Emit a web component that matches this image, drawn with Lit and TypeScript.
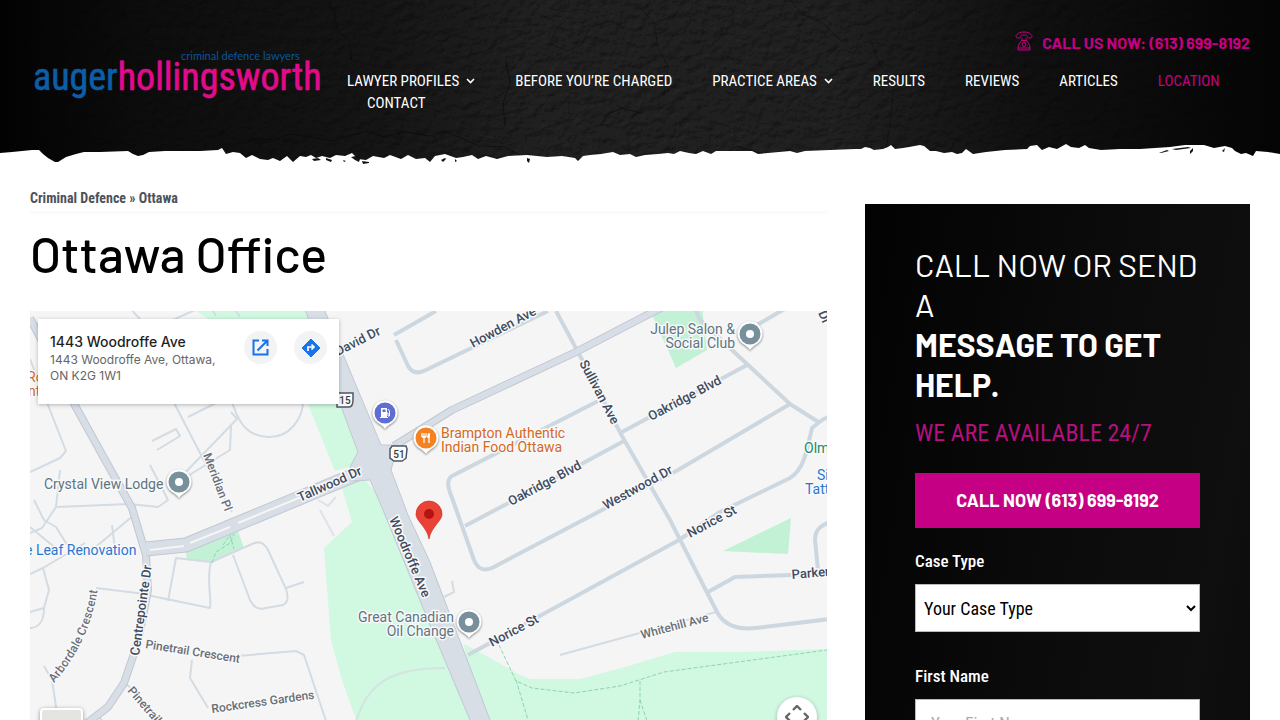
import { LitElement, html, svg, css } from "lit";
import { customElement } from "lit/decorators.js";
import { classMap } from "lit/directives/class-map.js";

interface NavItem {
  text: string;
  menu?: boolean;
  current?: boolean;
}

const NAV: NavItem[] = [
  { text: "Lawyer Profiles", menu: true },
  { text: "Before You’re Charged" },
  { text: "Practice Areas", menu: true },
  { text: "Results" },
  { text: "Reviews" },
  { text: "Articles" },
  { text: "Location", current: true },
  { text: "Contact" },
];

@customElement("site-header")
class SiteHeader extends LitElement {
  static styles = css`
    :host {
      display: block;
      position: relative;
      background: #0d0d0d;
      font-family: "Roboto Condensed", Roboto, sans-serif;
    }
    .texture,
    .tear {
      position: absolute;
      left: 0;
      width: 100%;
    }
    .texture {
      top: 0;
      height: 100%;
    }
    .tear {
      bottom: 0;
      height: 30px;
    }
    .bar {
      position: relative;
      display: flex;
      align-items: flex-start;
      gap: 25px;
      padding: 32px 30px 53px;
    }
    .logo {
      flex: none;
      margin-top: 16px;
      line-height: 0;
    }
    .logo svg {
      overflow: visible;
    }
    .name {
      font-family: "Roboto Condensed", Roboto, sans-serif;
      font-size: 38px;
      stroke-width: 0.6;
    }
    .blue {
      fill: #0b5ea8;
      stroke: #0b5ea8;
    }
    .pink {
      fill: #e20a8d;
      stroke: #e20a8d;
    }
    .tagline {
      fill: #0a559a;
      font-family: Lato, sans-serif;
      font-size: 11px;
    }
    .right {
      flex: 1;
      min-width: 0;
    }
    .phone {
      display: flex;
      justify-content: flex-end;
      align-items: center;
      gap: 9px;
      height: 22px;
      font: 700 16px/22px Barlow, sans-serif;
    }
    .phone a {
      color: #c50084;
      text-decoration: none;
    }
    .phone svg {
      margin-bottom: 4px;
    }
    ul {
      display: flex;
      flex-wrap: wrap;
      margin: 16px 0 0;
      padding: 0;
      list-style: none;
    }
    li {
      padding: 0 20px;
      line-height: 22px;
    }
    li:first-child {
      padding-left: 0;
    }
    li a {
      display: flex;
      align-items: center;
      gap: 7px;
      color: #fff;
      font-size: 15px;
      text-decoration: none;
      text-transform: uppercase;
    }
    li.current a {
      color: #c50084;
    }
  `;

  render() {
    return html`
      <svg class="texture" viewBox="0 0 1280 167" preserveAspectRatio="none" aria-hidden="true">
        <defs>
          <filter id="stone" x="0" y="0" width="100%" height="100%">
            <feTurbulence type="fractalNoise" baseFrequency="0.09 0.12" numOctaves="5" seed="8" />
            <feDiffuseLighting lighting-color="#282828" surfaceScale="2" diffuseConstant="1">
              <feDistantLight azimuth="235" elevation="50" />
            </feDiffuseLighting>
          </filter>
          <linearGradient id="shade">
            <stop offset="0" stop-color="#020202" />
            <stop offset="0.12" stop-color="#060606" stop-opacity="0.75" />
            <stop offset="0.3" stop-color="#080808" stop-opacity="0.5" />
            <stop offset="0.42" stop-color="#0a0a0a" stop-opacity="0.1" />
            <stop offset="0.65" stop-color="#0a0a0a" stop-opacity="0.1" />
            <stop offset="0.8" stop-color="#070707" stop-opacity="0.65" />
            <stop offset="1" stop-color="#030303" stop-opacity="0.96" />
          </linearGradient>
        </defs>
        <rect width="1280" height="167" filter="url(#stone)" />
        <g fill="none" stroke="#080808" stroke-opacity=".6">
          <path d="M326 0l8 12 3 17 12 12 3 20" />
          <path d="M250 138l24 2 16-6 22 3 20 4 16-5 21-5 14 6 24-5 22 4 14-5 16 6 20 9 26 1 28 15 22 4 40-2 40-7 28 4 36-9 20 5 18-11 30 9 40 2 26-6" />
          <path d="M566 20l-10 9-6 15 18 7 14-7 8-17 22-6 12 7M640 8l14 14 4 26 10 18-4 30M870 40l10 24 14 20-4 40-6 38M790 0l12 14 22 10 18 18" stroke-opacity=".4" />
          <path d="M506 62l4 20-7 22 2 22M600 126l8-12 14-6 18 5" />
        </g>
        <rect width="1280" height="167" fill="url(#shade)" />
      </svg>
      <svg class="tear" viewBox="0 0 1280 30" preserveAspectRatio="none" aria-hidden="true">
        <path
          fill="#fff"
          d="M0 16L12 15 22 14 32 13 39 13 43 17 48 21 55 25 58 25 66 20 76 17 84 15 100 15 128 14 133 17 138 19 143 18 149 15 165 14 200 14 218 13 222 11 226 17 233 15 240 16 246 21 252 18 260 22 268 23 273 21 280 24 287 19 293 25 300 19 306 20 311 18 316 21 322 19 330 21 336 18 345 19 352 16 358 22 366 23 373 19 384 21 390 18 401 22 408 18 416 22 425 21 430 25 435 19 445 17 456 21 463 20 472 18 478 22 486 19 497 22 508 19 527 18 547 20 562 19 575 21 578 24 583 19 590 18 601 17 613 15 620 18 630 17 636 20 645 18 658 17 668 16 674 17 680 14 689 16 696 17 703 14 711 17 716 14 740 14 752 14 758 17 768 16 790 14 797 16 805 14 830 13 855 12 861 12 865 10 870 11 874 13 883 12 888 10 891 8 895 12 903 11 909 10 920 8 924 9 930 14 936 14 944 16 952 15 957 17 962 16 966 12 973 17 986 15 1005 13 1027 12 1030 9 1037 8 1042 13 1049 10 1057 12 1066 7 1071 10 1079 11 1085 8 1089 11 1101 13 1120 12 1140 12 1155 11 1170 10 1185 8 1204 8 1214 11 1225 9 1232 11 1235 14 1241 17 1246 16 1253 19 1256 14 1268 15 1280 17V30H0Z"
        />
        <g fill="#151515">
          <path d="M312 22l6-1 3 2-7 1zM326 21l6 2-1 2-5-2zM351 20l5-1 4 3-1 3-4-2zM362 24l7 1 0 1-6 1zM343 23l3 1-2 1zM441 23l4-2 1 1-3 3zM455 22l2 2-2 1zM527 21l3 1-1 4-2-2z" />
          <path d="M1159 16l8-3 2 1-8 2zM1172 12l16-2 3 1-15 2zM1190 14l3-3 0 3-3 3zM1222 14l3-3-1 4z" />
        </g>
      </svg>
      <div class="bar">
        <a class="logo" href="#" aria-label="Auger Hollingsworth home">
          <svg width="292" height="54" viewBox="0 0 292 54">
            <text class="name" x="3" y="42"><tspan class="blue">auger</tspan><tspan class="pink">hollingsworth</tspan></text>
            <text class="tagline" x="151" y="12">criminal defence lawyers</text>
          </svg>
        </a>
        <div class="right">
          <div class="phone">
            <svg width="18" height="20" viewBox="0 0 18 20" fill="none" stroke="#c50084" aria-hidden="true">
              <path d="M1 5.500C1.500 2.500 5 1 9 1s7.500 1.500 8 4.500c0 1-.6 1.400-1.600 1.400h-2c-.8 0-1-.5-1-1.400C12.300 4.500 11 4 9 4s-3.300.5-3.400 1.500c0 .9-.2 1.400-1 1.400h-2C1.600 6.900 1 6.500 1 5.500z" />
              <path d="M7 7v2.500h4V7M6.500 9.500h5c1.500 1.500 3 4 3.500 7v2.500H3v-2.500c.5-3 2-5.500 3.500-7zM3 17h12" />
              <ellipse cx="9" cy="13.500" rx="1.800" ry="2.200" />
            </svg>
            <a href="tel:6136998192">CALL US NOW: (613) 699-8192</a>
          </div>
          <nav>
            <ul>
              ${NAV.map(
                (item) => html`<li class=${classMap({ current: !!item.current })}>
                  <a href="#">${item.text}${item.menu
                    ? html`<svg width="9" height="6" viewBox="0 0 9 6" fill="none" stroke="currentColor" stroke-width="1.6"><path d="M1 1l3.500 3.500L8 1" /></svg>`
                    : ""}</a>
                </li>`,
              )}
            </ul>
          </nav>
        </div>
      </div>
    `;
  }
}

const pin = (x: number, y: number, color: string, glyph: unknown) => svg`
  <g transform="translate(${x} ${y})">
    <path class="drop" d="M0 16c-2-3-4-4-7-6a12.500 12.500 0 1 1 14 0c-3 2-5 3-7 6z"/>
    <circle r="10.500" fill=${color}/>
    ${glyph}
  </g>`;
const dot = svg`<circle r="4" fill="#fff"/>`;

@customElement("office-map")
class OfficeMap extends LitElement {
  static styles = css`
    :host {
      display: block;
      position: relative;
      overflow: hidden;
      height: 450px;
      background: #f5f5f5;
      font-family: Roboto, sans-serif;
    }
    .canvas {
      display: block;
      width: 100%;
      height: 100%;
    }
    .park {
      fill: #d1f8e1;
    }
    .garden {
      fill: #c2f1d5;
    }
    .lane,
    .street,
    .road,
    .edge,
    .median,
    .trail {
      fill: none;
      stroke-linejoin: round;
    }
    .lane {
      stroke: #d3dbe3;
      stroke-width: 2;
    }
    .street {
      stroke: #cdd7df;
      stroke-width: 4;
    }
    .edge {
      stroke: #c0c8d3;
    }
    .road {
      stroke: #d8dee6;
    }
    .median {
      stroke: #f5f5f5;
      stroke-width: 2;
    }
    .highway {
      fill: #d8dee6;
      stroke: #c0c8d3;
    }
    .trail {
      stroke: #8fd3b4;
      stroke-width: 1;
      stroke-dasharray: 4 2;
    }
    .drop {
      fill: #fff;
      filter: drop-shadow(0 1px 1px #0007);
    }
    text {
      font-size: 13px;
      fill: #5f6672;
      stroke: #f8f9fa;
      stroke-width: 3;
      stroke-linejoin: round;
      paint-order: stroke;
    }
    .major {
      fill: #3f4b5f;
      font-weight: 500;
    }
    .minor {
      font-size: 12px;
      font-weight: 500;
      fill: #696e76;
    }
    .place {
      font-size: 14px;
      fill: #5f7580;
    }
    .food {
      fill: #d5691f;
    }
    .shop {
      fill: #2b76d2;
    }
    .gym {
      fill: #278a64;
    }
    .end {
      text-anchor: end;
    }
    .shield {
      fill: #fff;
      stroke: #4c5561;
      stroke-width: 1.5;
    }
    .number {
      font-size: 10px;
      font-weight: 500;
      fill: #333b46;
      text-anchor: middle;
    }
    .card {
      position: absolute;
      top: 8px;
      left: 8px;
      display: flex;
      box-sizing: border-box;
      width: 301px;
      min-height: 85px;
      padding: 12px;
      background: #fff;
      box-shadow: 0 1px 4px #0004;
      font-family: Inter, Roboto, sans-serif;
    }
    .words {
      flex: 1;
      padding-top: 2px;
    }
    .title {
      font-size: 14px;
      font-weight: 500;
      line-height: 17px;
      color: #1f1f1f;
    }
    .address {
      width: 170px;
      padding-top: 2px;
      font-size: 12px;
      line-height: 16px;
      color: #666;
    }
    .actions {
      display: flex;
      gap: 17px;
    }
    .round {
      display: grid;
      place-items: center;
      width: 33px;
      height: 33px;
      border-radius: 50%;
      background: #f1f3f4;
    }
    .camera {
      position: absolute;
      right: 10px;
      bottom: 24px;
      display: grid;
      place-items: center;
      width: 40px;
      height: 40px;
      padding: 0;
      border: 0;
      border-radius: 50%;
      background: #fff;
      box-shadow: 0 1px 4px #0004;
    }
    .layers {
      position: absolute;
      left: 10px;
      bottom: 10px;
      width: 43px;
      height: 43px;
      border: 2px solid #fff;
      border-radius: 4px;
      background: #e4e4e0;
      box-shadow: 0 1px 4px #0006;
    }
  `;

  render() {
    return html`
      <svg class="canvas" viewBox="30 311 797 450" preserveAspectRatio="xMidYMin slice" role="img" aria-label="Map of the office">
        <path class="park" d="M180 300H310L345 400 366 452 352 466 335 471 308 404 298 380z" />
        <path class="park" d="M340 481L362 476 390 510 480 740 486 765H372L342 680 331 640 324 548 352 522z" />
        <path class="park" d="M464 644L494 660 518 674 530 679H580L625 667 675 652H740L830 649V765H480z" />
        <path class="garden" d="M648 306h54L707 350 676 368zM723 551L791 518 788 554zM186 552L238 531 244 548 212 563 187 560z" />

        <path class="lane" d="M30 359L66 451 60 458 30 472M170 395L214 480 232 512M128 306L150 330 204 306M210 306l6 10M232 305l8 12M230 395C238 425 248 436 268 437S305 420 303 395M188 417L222 400M152 441L176 429 180 436 157 450M178 480L237 419 231 412M178 482L230 450 231 426M150 465L168 500 158 507 130 504 56 507 42 528 30 533M34 500L44 520 56 527 66 543 58 550 30 527M66 543L86 555 134 515M56 507L60 470M30 574L43 568 85 543M43 568L49 590 44 608 30 612M44 608C44 622 38 628 30 628M112 525L115 550M96 588L137 593 210 608C212 600 206 580 211 562L176 558 168 601M233 555L250 600C254 608 260 610 266 608L283 605C289 602 288 596 286 589L268 550C264 542 258 541 252 544L211 562M286 588L304 582M238 656L296 651 304 655 329 730M192 660L190 678 208 708M44 666L52 680 58 720M124 683L137 692M97 712L107 730M560 655L716 612M452 581L454 592 444 597" />
        <path class="trail" d="M212 563L216 552 230 543 234 534M223 545l7-10 4 14M499 645L516 681 532 688 574 693 620 686 664 672 827 650M516 680L540 760M640 681V700L634 765M640 700l20 60" />
        <path class="lane" d="M355 725C367 680 395 668 445 668M320 510L334 536M318 500l10 6 8-9" stroke-opacity=".7" />

        <path class="street" d="M396 340L408 366C412 373 418 374 426 370L548 311M394 335L436 311M556 311L578 352 622 436 670 520 717 612C724 625 738 630 756 628L830 619M452 476C446 480 448 488 451 495L474 560C478 570 484 571 492 568L678 470 790 404M465 526L548 482 624 441M622 432L747 365M452 476L600 400M468 655L679 540 720 512 790 478C803 470 806 455 812 428L822 420 830 416M694 306L700 320 732 350 790 404 820 423M748 330L790 306M708 592L735 577 820 574M818 570L815 540C815 530 820 526 830 522" />
        <path class="edge" stroke-width="8" d="M394 446L452 410 576 352 680 298M30 318L72 400 104 458 132 508 146 555 148 590 138 642 124 683 108 707 78 730 38 760" />
        <path class="road" stroke-width="6" d="M394 446L452 410 576 352 680 298M30 318L72 400 104 458 132 508 146 555 148 590 138 642 124 683 108 707 78 730 38 760" />
        <path class="edge" stroke-width="15" d="M146 549L186 545 362 472" />
        <path class="road" stroke-width="13" d="M146 549L186 545 362 472" />
        <path class="median" d="M150 550L184 546M190 543L230 527M238 523L335 483" />
        <path class="highway" d="M303 304H322L381 445H398L391 470 408 515 430 562 490 720 507 765H488L470 720 430 625 383 510 370 480 350 481V467L358 452z" />

        <text class="major" transform="translate(338 356) rotate(-27)">David Dr</text>
        <text class="major" transform="translate(473 348) rotate(-28)">Howden Ave</text>
        <text class="major" transform="translate(579 363) rotate(62)">Sullivan Ave</text>
        <text class="major" transform="translate(651 421) rotate(-28)">Oakridge Blvd</text>
        <text class="major" transform="translate(511 506) rotate(-28)">Oakridge Blvd</text>
        <text class="major" transform="translate(606 510) rotate(-29)">Westwood Dr</text>
        <text class="major" transform="translate(690 538) rotate(-28)">Norice St</text>
        <text class="major" transform="translate(492 647) rotate(-28)">Norice St</text>
        <text class="major" transform="translate(792 579) rotate(-5)">Parker</text>
        <text class="major" transform="translate(300 502) rotate(-24)">Tallwood Dr</text>
        <text class="major" transform="translate(389 519) rotate(67)">Woodroffe Ave</text>
        <text class="major" transform="translate(139 656) rotate(-82)">Centrepointe Dr</text>
        <text class="major" transform="translate(818 313) rotate(66)">Dr</text>
        <text class="minor" transform="translate(203 455) rotate(69)">Meridian Pl</text>
        <text class="minor" transform="translate(145 648) rotate(9)">Pinetrail Crescent</text>
        <text class="minor" transform="translate(127 691) rotate(49)">Pinetrail</text>
        <text class="minor" transform="translate(212 713) rotate(-8)">Rockcress Gardens</text>
        <text class="minor" transform="translate(642 639) rotate(-15)">Whitehill Ave</text>
        <path id="arbordale" fill="none" d="M54 683C75 658 92 630 99 582" />
        <text class="minor"><textPath href="#arbordale">Arbordale Crescent</textPath></text>

        <path class="shield" d="M337 393h16v6c0 5-1 8-4 8h-12z" />
        <text class="number" x="345" y="404">15</text>
        <path class="shield" d="M392 446h14l1 3-1 9-4 3h-8l-4-3v-9z" />
        <text class="number" x="399" y="457.500">51</text>

        <text class="place" x="44" y="489">Crystal View Lodge</text>
        <text class="place shop" x="25" y="555">e Leaf Renovation</text>
        <text class="place food" x="441" y="438">Brampton Authentic</text>
        <text class="place food" x="441" y="452">Indian Food Ottawa</text>
        <text class="place end" x="735" y="334">Julep Salon &amp;</text>
        <text class="place end" x="735" y="348">Social Club</text>
        <text class="place end" x="454" y="622">Great Canadian</text>
        <text class="place end" x="454" y="636">Oil Change</text>
        <text class="place gym" x="804" y="453">Olm</text>
        <text class="place shop" x="817" y="480">Si</text>
        <text class="place shop" x="805" y="494">Tatt</text>
        <text class="place food" x="27" y="382">Ro</text>
        <text class="place food" x="28" y="396">nt</text>

        ${pin(179, 482, "#78909c", dot)} ${pin(750, 334, "#78909c", dot)}
        ${pin(469, 622, "#78909c", dot)}
        ${pin(385, 413, "#5f6fd1", svg`<path d="M-4-5h6v9h1v1h-8v-1h1zm1.500 1.500v2.500h3v-2.500z" fill="#fff" fill-rule="evenodd"/><path d="M2 0h1v3h1.500v-5l-1.500-2" fill="none" stroke="#fff"/>`)}
        ${pin(426, 438, "#f58220", svg`<path d="M-4-5v4M-2-5v4M0-5v4M-2-1v6M3-5v10" stroke="#fff" stroke-width="1.200"/><path d="M-4.500-2h5l-1 2h-3zM3.500-5C1-4 1-1 1.500 0h2z" fill="#fff"/>`)}
        <path d="M429 539c-1-6-4-10-7-14s-6-7-6-11a13 13 0 1 1 26 0c0 4-3 7-6 11s-6 8-7 14z" fill="#ea4335" stroke="#c5221f" stroke-width=".6" />
        <circle cx="429" cy="514" r="5" fill="#b31412" />
      </svg>
      <div class="card">
        <div class="words">
          <div class="title">1443 Woodroffe Ave</div>
          <div class="address">1443 Woodroffe Ave, Ottawa, ON K2G 1W1</div>
        </div>
        <div class="actions">
          <a class="round" href="#" aria-label="Open in Maps">
            <svg width="17" height="17" viewBox="0 0 17 17" fill="none" stroke="#1a73e8" stroke-width="2"><path d="M7 1.500H1.500v14h14V10M10 1.500h5.500V7M15 2L5.500 11.500" /></svg>
          </a>
          <a class="round" href="#" aria-label="Directions">
            <svg width="20" height="20" viewBox="0 0 20 20"><path d="M10 1l9 9-9 9-9-9z" fill="#1a73e8" stroke="#1a73e8" stroke-linejoin="round" /><path d="M7 13V9h6M10.500 6.500L13 9l-2.500 2.500" fill="none" stroke="#fff" stroke-width="1.700" /></svg>
          </a>
        </div>
      </div>
      <button class="layers" aria-label="Show satellite imagery"></button>
      <button class="camera" aria-label="Map camera controls">
        <svg width="24" height="24" viewBox="0 0 24 24" fill="none" stroke="#666" stroke-width="2.400"><path d="M8 5l4-4 4 4M8 19l4 4 4-4M5 8l-4 4 4 4M19 8l4 4-4 4" /></svg>
      </button>
    `;
  }
}

@customElement("contact-panel")
class ContactPanel extends LitElement {
  static styles = css`
    :host {
      display: block;
      box-sizing: border-box;
      padding: 40px 50px 50px;
      background: linear-gradient(100deg, #020202, #0a0a0a 45%, #0f0f0f 85%, #0b0b0b);
      color: #fff;
      font-family: "Roboto Condensed", Roboto, sans-serif;
    }
    h2 {
      margin: 0;
      font: 400 32px/40px Barlow, sans-serif;
    }
    strong {
      display: block;
      font-weight: 700;
    }
    .open {
      margin: 14px 0 25px;
      color: #b5107e;
      font-size: 24px;
      line-height: 30px;
    }
    .call {
      display: block;
      background: #c50084;
      color: #fff;
      font: 700 18px/55px Barlow, sans-serif;
      text-align: center;
      text-decoration: none;
    }
    label {
      display: block;
      margin: 22px 0 12px;
      font-size: 17px;
      font-weight: 500;
      line-height: 22px;
    }
    select,
    input {
      box-sizing: border-box;
      width: 100%;
      height: 48px;
      border: 1px solid #bbb;
      border-radius: 0;
      background: #fff;
      color: #000;
      font: 400 18px "Roboto Condensed", Roboto, sans-serif;
    }
    select {
      margin-bottom: 11px;
      padding: 0 4px;
    }
    input {
      padding: 0 15px;
      font-size: 17px;
    }
    input::placeholder {
      color: #aaa;
    }
  `;

  render() {
    return html`
      <h2>CALL NOW OR SEND A <strong>MESSAGE TO GET HELP.</strong></h2>
      <p class="open">WE ARE AVAILABLE 24/7</p>
      <a class="call" href="tel:6136998192">CALL NOW (613) 699-8192</a>
      <form>
        <label for="case">Case Type</label>
        <select id="case"><option>Your Case Type</option></select>
        <label for="first">First Name</label>
        <input id="first" type="text" placeholder="Your First Name" />
      </form>
    `;
  }
}

@customElement("app-root")
class AppRoot extends LitElement {
  static styles = css`
    :host {
      display: block;
      background: #fff;
    }
    main {
      display: grid;
      grid-template-columns: minmax(0, 1fr) 385px;
      align-items: start;
      gap: 38px;
      padding: 20px 30px 40px;
    }
    .crumbs {
      padding-bottom: 2px;
      border-bottom: 3px solid #fbfbfb;
      font: 700 14px/22px "Roboto Condensed", Roboto, sans-serif;
      color: #4d5259;
    }
    .crumbs a {
      color: inherit;
      text-decoration: none;
    }
    h1 {
      margin: 6px 0 25px;
      font: 500 50px/66px Barlow, sans-serif;
      color: #000;
    }
    contact-panel {
      margin-top: 17px;
    }
  `;

  render() {
    return html`
      <site-header></site-header>
      <main>
        <div>
          <nav class="crumbs"><a href="#">Criminal Defence</a> » <span>Ottawa</span></nav>
          <h1>Ottawa Office</h1>
          <office-map></office-map>
        </div>
        <contact-panel></contact-panel>
      </main>
    `;
  }
}
